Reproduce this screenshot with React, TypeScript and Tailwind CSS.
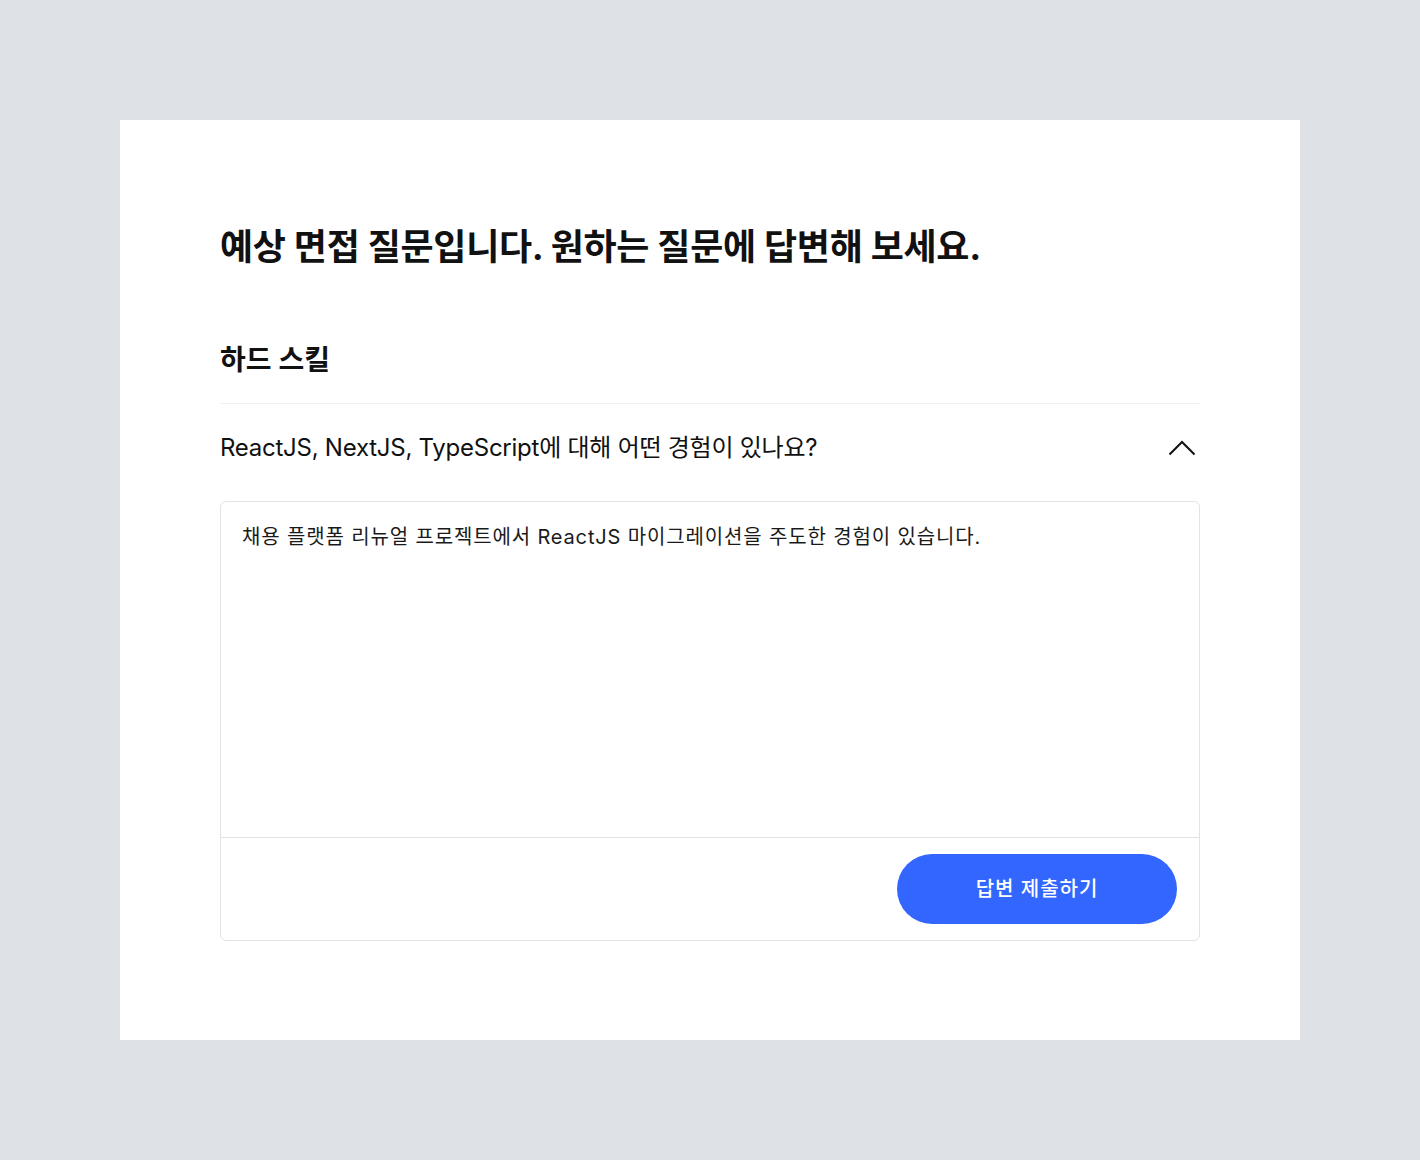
import React from "react";

export default function App() {
  return (
    <div
      className="min-h-screen bg-[#dee1e6] p-[120px]"
      style={{ fontFamily: '"Inter", "Noto Sans CJK KR", sans-serif' }}
    >
      <div className="bg-white h-[920px] px-[100px] pt-[102px]">
        <h1 className="text-[36px] leading-[50px] font-bold tracking-[-0.3px] text-[#111111]">
          예상 면접 질문입니다. 원하는 질문에 답변해 보세요.
        </h1>
        <div className="mt-[68px] pb-[23px] border-b border-[#f0f0f0]">
          <h2 className="text-[28px] leading-[40px] font-semibold tracking-[0px] text-[#111111]">
            하드 스킬
          </h2>
        </div>
        <div className="h-[88px] flex items-center justify-between">
          <span className="text-[24px] tracking-[-0.25px] text-[#111111]">
            ReactJS, NextJS, TypeScript에 대해 어떤 경험이 있나요?
          </span>
          <svg
            width="30"
            height="18"
            viewBox="0 0 30 18"
            fill="none"
            stroke="#111111"
            strokeWidth="2"
            className="mr-[2px]"
          >
            <path d="M1.5 15.5 L14 3 L26.5 15.5" />
          </svg>
        </div>
        <div className="mt-[9px] h-[440px] border border-[#e3e3e3] rounded-[6px] flex flex-col">
          <textarea
            className="h-[335px] resize-none outline-none px-[21px] pt-[20px] text-[20px] leading-[30px] tracking-[0.85px] text-[#1a1a1a]"
            defaultValue="채용 플랫폼 리뉴얼 프로젝트에서 ReactJS 마이그레이션을 주도한 경험이 있습니다."
            style={{ fontFamily: '"Inter", "Noto Sans CJK KR", sans-serif' }}
          />
          <div className="flex-1 border-t border-[#e3e3e3] flex items-center justify-end px-[22px]">
            <button className="w-[280px] h-[70px] rounded-full bg-[#3366ff] text-white text-[20px] font-medium tracking-[1px]">
              답변 제출하기
            </button>
          </div>
        </div>
      </div>
    </div>
  );
}
